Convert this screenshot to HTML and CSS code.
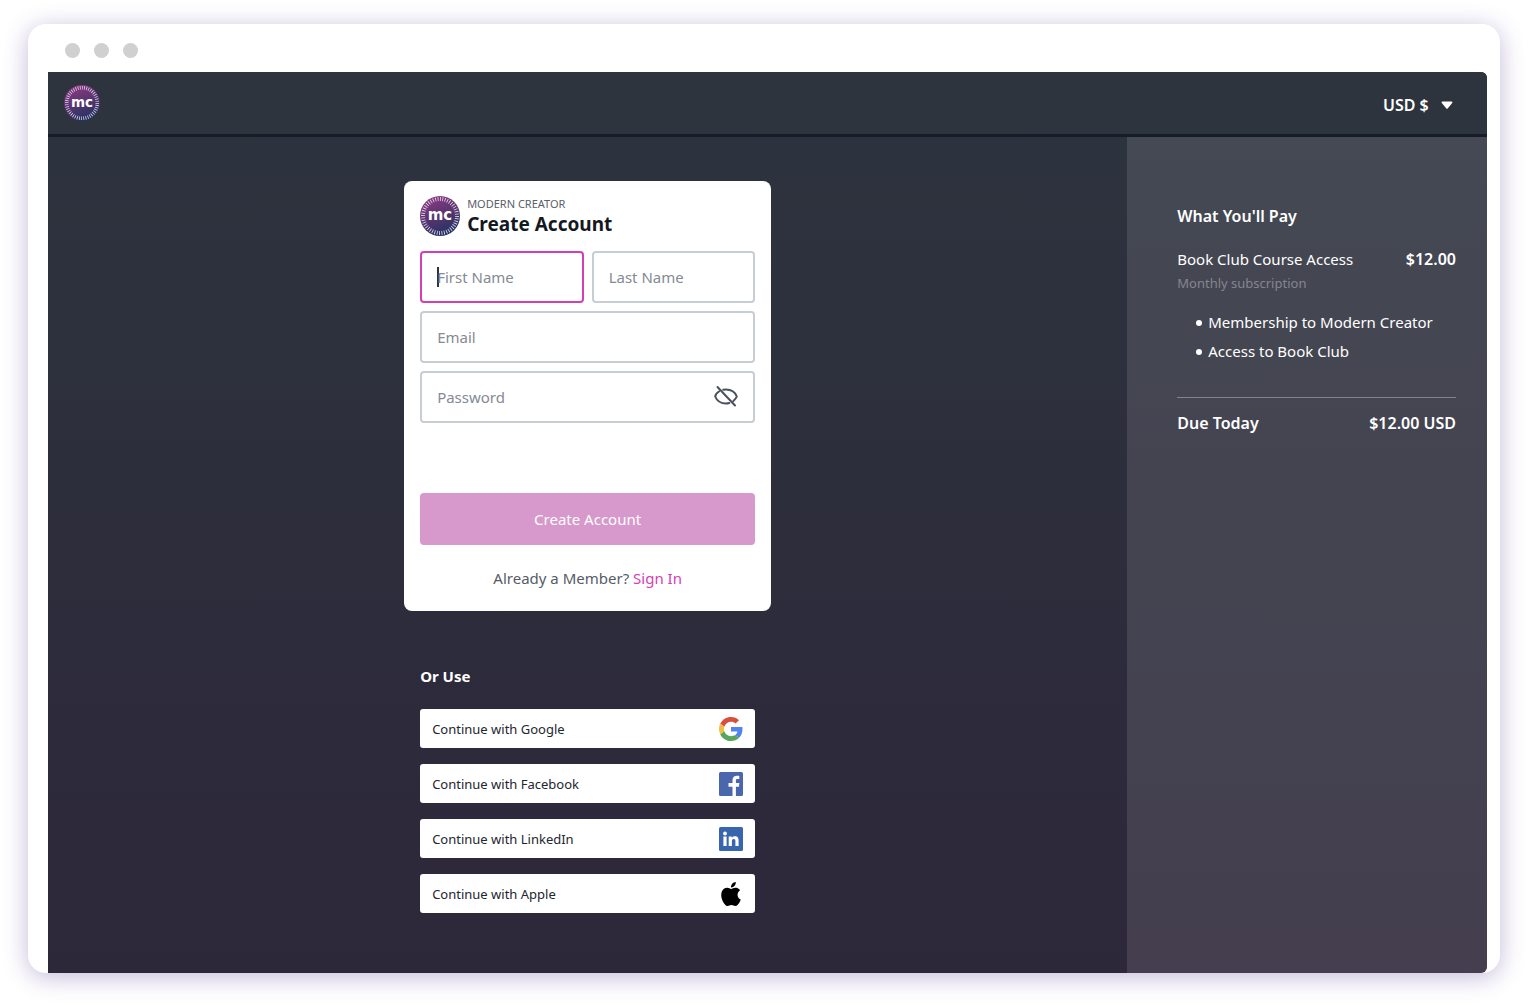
FILE: index.html
```html
<!DOCTYPE html>
<html lang="en">
<head>
  <meta charset="UTF-8">
  <meta name="viewport" content="width=device-width, initial-scale=1">
  <title>Create Account</title>
  <link rel="stylesheet" href="styles.css">
</head>
<body>

<div class="window">
  <div class="title-bar">
    <span class="dot"></span>
    <span class="dot"></span>
    <span class="dot"></span>
  </div>

  <div class="app">
    <header class="top-bar">
      <svg class="logo-small" viewBox="0 0 40 40" role="img" aria-label="Modern Creator">
        <defs>
          <linearGradient id="logoFill" x1="0.3" y1="0" x2="0.7" y2="1">
            <stop offset="0" stop-color="#8b3a82"/>
            <stop offset="0.5" stop-color="#56346f"/>
            <stop offset="1" stop-color="#1d3460"/>
          </linearGradient>
        </defs>
        <circle cx="20" cy="20" r="20" fill="url(#logoFill)"/>
        <circle class="logo-ring" cx="20" cy="20" r="17" pathLength="88"/>
        <text class="logo-text" x="20" y="24">mc</text>
      </svg>
      <div class="currency">
        <select class="currency-select" aria-label="Currency">
          <option>USD $</option>
        </select>
        <svg class="caret" viewBox="0 0 12 8" aria-hidden="true">
          <path d="M1.5 1.500h9L6 6.800z" fill="#fff" stroke="#fff" stroke-width="1.8" stroke-linejoin="round"/>
        </svg>
      </div>
    </header>

    <div class="content">
      <main class="main">
        <form class="card">
          <div class="card-header">
            <svg class="logo" viewBox="0 0 40 40" aria-hidden="true">
              <circle cx="20" cy="20" r="20" fill="url(#logoFill)"/>
              <circle class="logo-ring" cx="20" cy="20" r="17" pathLength="88"/>
              <text class="logo-text" x="20" y="24">mc</text>
            </svg>
            <div>
              <p class="brand">MODERN CREATOR</p>
              <h1 class="card-title">Create Account</h1>
            </div>
          </div>

          <div class="fields">
            <div class="name-row">
              <input class="field" type="text" id="firstName" placeholder="First Name" aria-label="First Name" autofocus>
              <input class="field" type="text" id="lastName" placeholder="Last Name" aria-label="Last Name">
            </div>
            <input class="field" type="email" id="email" placeholder="Email" aria-label="Email">
            <div class="field password-field">
              <input class="password-input" type="password" id="password" placeholder="Password" aria-label="Password">
              <button class="toggle" type="button" aria-label="Show password">
                <svg viewBox="0 0 24 24" aria-hidden="true">
                  <path d="M5 6.500C3 7.700 1.500 9.500 1.200 11.500c1.700 4.300 5.900 7 10.800 7 1.200 0 2.300-.2 3.300-.5M9.200 4.800c.9-.2 1.800-.3 2.800-.3 4.900 0 9.100 2.700 10.800 7-.6 1.500-1.700 3-3.400 4.400M3.500 2l17.500 18.500"/>
                </svg>
              </button>
            </div>
          </div>

          <button class="submit" type="button">Create Account</button>
          <p class="member">Already a Member? <a href="#">Sign In</a></p>
        </form>

        <section class="social">
          <h2 class="social-title">Or Use</h2>
          <button class="social-button" type="button">
            Continue with Google
            <svg viewBox="0 0 48 48" aria-hidden="true">
              <path fill="#d94f3d" d="M24 9.500c3.540 0 6.710 1.220 9.210 3.600l6.850-6.850C35.900 2.380 30.470 0 24 0 14.620 0 6.510 5.380 2.560 13.220l7.980 6.190C12.430 13.720 17.740 9.500 24 9.500z"/>
              <path fill="#5383ec" d="M46.980 24.550c0-1.570-.15-3.090-.38-4.550H24v9.020h12.940c-.58 2.960-2.260 5.480-4.780 7.180l7.730 6c4.510-4.180 7.090-10.360 7.090-17.650z"/>
              <path fill="#f3bd42" d="M10.530 28.590c-.48-1.450-.76-2.990-.76-4.590s.27-3.140.76-4.590l-7.980-6.190C.92 16.460 0 20.120 0 24s.92 7.540 2.560 10.780z"/>
              <path fill="#58a55c" d="M24 48c6.480 0 11.930-2.130 15.890-5.810l-7.730-6c-2.150 1.450-4.920 2.300-8.160 2.300-6.260 0-11.570-4.220-13.470-9.910l-7.980 6.190C6.510 42.620 14.620 48 24 48z"/>
            </svg>
          </button>
          <button class="social-button" type="button">
            Continue with Facebook
            <svg viewBox="0 0 24 24" aria-hidden="true">
              <rect width="24" height="24" rx="1.500" fill="#4a66ad"/>
              <path fill="#fff" d="M13.500 24v-9.300h-4v-3.600h4V8.300c0-3.100 1.900-4.500 4.500-4.500 1.100 0 2 .1 2.300.1v3.200h-1.700c-1.400 0-1.700.7-1.700 1.700v2.300h3.500l-.5 3.600h-3V24z"/>
            </svg>
          </button>
          <button class="social-button" type="button">
            Continue with LinkedIn
            <svg viewBox="0 0 24 24" aria-hidden="true">
              <rect width="24" height="24" rx="1.500" fill="#3766ae"/>
              <g fill="#fff">
                <circle cx="6" cy="6.500" r="1.900"/>
                <rect x="4.400" y="9.500" width="3.200" height="9.500"/>
                <path d="M9.700 9.500h3.100v1.300c.5-.9 1.500-1.600 3-1.600 3.200 0 3.800 2 3.800 4.700V19h-3.200v-4.600c0-1.200 0-2.500-1.600-2.500s-1.900 1.200-1.900 2.400V19H9.700z"/>
              </g>
            </svg>
          </button>
          <button class="social-button" type="button">
            Continue with Apple
            <svg viewBox="0 0 24 24" aria-hidden="true">
              <path d="M12.150 6.900c-.95 0-2.420-1.080-3.960-1.040-2.040.03-3.910 1.180-4.960 3.010-2.120 3.680-.55 9.100 1.520 12.090 1.010 1.450 2.210 3.090 3.790 3.040 1.520-.07 2.090-.99 3.940-.99 1.830 0 2.350.99 3.960.95 1.640-.03 2.680-1.480 3.680-2.950 1.160-1.690 1.640-3.320 1.660-3.410-.04-.01-3.180-1.220-3.220-4.860-.03-3.040 2.480-4.490 2.600-4.560-1.430-2.090-3.620-2.320-4.390-2.380-2-.16-3.680 1.090-4.610 1.090zM15.530 3.830c.84-1.010 1.400-2.430 1.250-3.830-1.210.05-2.660.8-3.530 1.820-.78.9-1.450 2.340-1.270 3.710 1.340.1 2.710-.69 3.560-1.700z"/>
            </svg>
          </button>
        </section>
      </main>

      <aside class="summary">
        <h2 class="summary-title">What You'll Pay</h2>
        <div class="summary-row">
          <span>Book Club Course Access</span>
          <strong>$12.00</strong>
        </div>
        <p class="period">Monthly subscription</p>
        <ul class="perks">
          <li>Membership to Modern Creator</li>
          <li>Access to Book Club</li>
        </ul>
        <div class="summary-row total">
          <strong>Due Today</strong>
          <strong>$12.00 USD</strong>
        </div>
      </aside>
    </div>
  </div>
</div>

</body>
</html>
```
FILE: styles.css
```css
* {
  box-sizing: border-box;
}

body {
  margin: 0;
  padding: 24px 28px 32px;
  min-height: 100vh;
  display: flex;
  background: #fff;
  font-family: "Noto Sans", sans-serif;
  font-size: 15px;
  line-height: 24px;
}

h1, h2, p, ul {
  margin: 0;
}

input, button, select {
  font: inherit;
}

strong {
  font-size: 16px;
  font-weight: 600;
}

.window {
  flex: 1;
  display: flex;
  flex-direction: column;
  padding: 0 13px 0 20px;
  background: #fff;
  border-radius: 18px;
  box-shadow: 0 4px 24px rgba(72, 40, 140, 0.32);
}

.title-bar {
  display: flex;
  align-items: center;
  gap: 14px;
  height: 48px;
  padding: 4px 17px 0;
}

.dot {
  width: 15px;
  height: 15px;
  border-radius: 50%;
  background: #d0d0d0;
}

.app {
  flex: 1;
  display: flex;
  flex-direction: column;
  border-radius: 0 6px 6px 0;
  overflow: hidden;
  background: linear-gradient(#2d343e, #2d273a);
  color: #fff;
}

.top-bar {
  display: flex;
  align-items: center;
  justify-content: space-between;
  height: 65px;
  padding: 0 34px 0 16px;
  background: #2d343d;
  border-bottom: 3px solid #181c26;
}

.logo-small {
  width: 36px;
  height: 36px;
}

.logo-ring {
  fill: none;
  stroke: #ded5e8;
  stroke-width: 4;
  stroke-dasharray: 0.7 1.3;
}

.logo-text {
  fill: #fff;
  font-family: "DejaVu Sans", sans-serif;
  font-size: 15px;
  font-weight: 700;
  text-anchor: middle;
}

.currency {
  display: flex;
  align-items: center;
  gap: 12px;
  padding-top: 3px;
}

.currency-select {
  appearance: none;
  padding: 0;
  border: none;
  background: none;
  color: #fff;
  font-size: 16px;
  font-weight: 600;
  cursor: pointer;
}

.caret {
  width: 12px;
  height: 8px;
}

.content {
  flex: 1;
  display: grid;
  grid-template-columns: 3fr 1fr;
}

.main {
  display: flex;
  flex-direction: column;
  align-items: center;
  padding: 44px 16px;
}

.card {
  width: 100%;
  max-width: 367px;
  padding: 15px 16px 21px;
  border-radius: 8px;
  background: #fff;
}

.card-header {
  display: flex;
  align-items: center;
  gap: 7px;
  margin-bottom: 15px;
}

.logo {
  width: 40px;
  height: 40px;
}

.brand {
  color: #5a606c;
  font-size: 11px;
  line-height: 16px;
}

.card-title {
  color: #14181f;
  font-size: 19px;
  font-weight: 700;
  line-height: 24px;
}

.fields {
  display: flex;
  flex-direction: column;
  gap: 8px;
}

.name-row {
  display: flex;
  gap: 8px;
}

.field {
  width: 100%;
  min-width: 0;
  height: 52px;
  padding: 0 15px;
  border: 2px solid #c8cdd4;
  border-radius: 4px;
  background: #fff;
  color: #2d343e;
}

.field:focus {
  border-color: #d33fb6;
  outline: none;
}

/* solid caret while the field is still empty */
.field:focus:placeholder-shown {
  background: linear-gradient(#2d343e, #2d343e) 15px center / 2px 20px no-repeat #fff;
  caret-color: transparent;
}

.field::placeholder,
.password-input::placeholder {
  color: #858a94;
}

.password-field {
  display: flex;
  align-items: center;
}

.password-input {
  flex: 1;
  min-width: 0;
  padding: 0;
  border: none;
  outline: none;
  background: none;
}

.toggle {
  display: flex;
  padding: 0;
  border: none;
  background: none;
  cursor: pointer;
}

.toggle svg {
  width: 24px;
  height: 24px;
  fill: none;
  stroke: #4a515d;
  stroke-width: 2;
  stroke-linecap: round;
}

.submit {
  width: 100%;
  height: 52px;
  margin: 70px 0 21px;
  border: none;
  border-radius: 4px;
  background: #d799cb;
  color: #fff;
  cursor: pointer;
}

.member {
  color: #555c68;
  text-align: center;
}

.member a {
  color: #d33fb6;
  text-decoration: none;
}

.social {
  display: flex;
  flex-direction: column;
  gap: 16px;
  width: 100%;
  max-width: 335px;
  margin-top: 53px;
}

.social-title {
  margin-bottom: 5px;
  font-size: 15px;
  font-weight: 700;
}

.social-button {
  display: flex;
  align-items: center;
  justify-content: space-between;
  height: 39px;
  padding: 0 12px;
  border: none;
  border-radius: 3px;
  background: #fff;
  color: #22262f;
  font-size: 13px;
  cursor: pointer;
}

.social-button svg {
  width: 24px;
  height: 24px;
}

.summary {
  padding: 67px 31px 32px 50px;
  background: rgba(255, 255, 255, 0.11);
}

.summary-title {
  margin-bottom: 19px;
  font-size: 16px;
  font-weight: 600;
}

.summary-row {
  display: flex;
  justify-content: space-between;
}

.period {
  color: #85858f;
  font-size: 13px;
}

.perks {
  margin-top: 13px;
  padding-left: 19px;
  line-height: 29px;
  list-style: none;
}

.perks li {
  display: flex;
  align-items: center;
  gap: 6px;
}

.perks li::before {
  content: "";
  width: 6px;
  height: 6px;
  border-radius: 50%;
  background: #fff;
}

.total {
  margin-top: 31px;
  padding-top: 13px;
  border-top: 1px solid #85828f;
}
```
